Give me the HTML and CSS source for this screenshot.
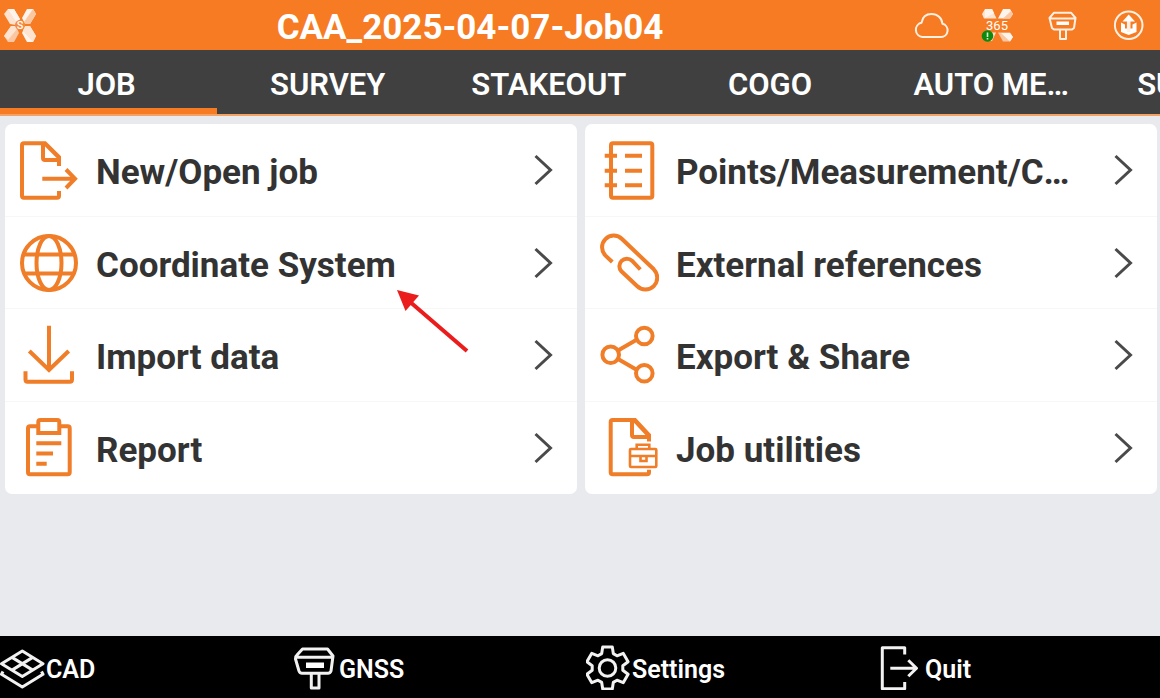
FILE: index.html
```html
<!DOCTYPE html>
<html lang="en">
<head>
  <meta charset="utf-8">
  <meta name="viewport" content="width=device-width, initial-scale=1">
  <title>CAA_2025-04-07-Job04</title>
  <link rel="stylesheet" href="styles.css">
</head>
<body>
  <header class="topbar">
    <svg class="logo" viewBox="0 0 40 50" aria-hidden="true">
      <path fill="#fde3d0" d="M4 14 8 9H14L20 19 16 25 10 24Z"/>
      <path fill="#fff4ec" d="M8 9H14L20 19 17 23Z"/>
      <path fill="#fff4ec" d="M36 14 33 9H27L22 18 25 24 30 24Z"/>
      <path fill="#fbc7a3" d="M36 14 33 9 24 22 25 24 30 24Z"/>
      <path fill="#fbc7a3" d="M4 36 8 42H14L19 33 16 26 11 26Z"/>
      <path fill="#fde3d0" d="M4 36 11 26 16 26 17 29 8 40Z"/>
      <path fill="#fff4ec" d="M36 36 33 42H27L22 33 25 26 30 26Z"/>
      <path fill="#fde3d0" d="M36 36 33 42 23 31 25 26 30 26Z"/>
      <circle cx="20" cy="25" r="5" fill="#f68a3c"/>
      <text class="logo-text" x="20" y="29" text-anchor="middle">S</text>
    </svg>
    <h1 class="title">CAA_2025-04-07-Job04</h1>
    <div class="status">
      <button class="status-btn" type="button" aria-label="Cloud">
        <svg class="line" viewBox="0 0 36 36">
          <path d="M9.500 30H28A6.700 6.700 0 0 0 29.500 16.800C29 11 24.500 7 18.500 7C13 7 9.300 10.500 8.500 15.800A7.200 7.200 0 0 0 9.500 30Z"/>
        </svg>
      </button>
      <button class="status-btn" type="button" aria-label="365 services">
        <svg viewBox="0 0 36 36">
          <path fill="#fde3d0" d="M3 7 6 2H13L17.500 11.500H5Z"/>
          <path fill="#fff4ec" d="M6 2H13L15 6 6 11Z"/>
          <path fill="#fff4ec" d="M34 7 31 2H24L19 11.500H31Z"/>
          <path fill="#fbc7a3" d="M34 7 32 4 24 11.500H31Z"/>
          <path fill="#fde3d0" d="M12 25.500H17L13 34H9Z"/>
          <path fill="#fbc7a3" d="M34 30 31 34.500H24L19 25.500H31Z"/>
          <path fill="#fff4ec" d="M34 30 31 34.500 22 26H31Z"/>
          <text class="badge-text" x="18" y="23" text-anchor="middle">365</text>
          <circle cx="8.500" cy="29" r="5.800" fill="#0d8a0d"/>
          <path stroke="#d8f5d8" stroke-width="1.600" d="M8.500 25.500V30M8.500 31V32.500"/>
        </svg>
      </button>
      <button class="status-btn" type="button" aria-label="Receiver">
        <svg class="line" viewBox="0 0 36 36">
          <path d="M9 5.700H26L30.500 11 29 21 27 22.500H9L7 21 4.500 11ZM5 11.500H30.500M15 23V32H21V23"/>
          <path fill="#fff" stroke="none" d="M11.500 14.500H24V18H11.500Z"/>
        </svg>
      </button>
      <button class="status-btn" type="button" aria-label="Upload">
        <svg class="line" viewBox="0 0 36 36">
          <circle cx="17.700" cy="18.300" r="13.800"/>
          <path fill="#fff" stroke="none" d="M10 15.500 14 17.500V21.500H21.500V17.500L25.500 15.500V25L17.700 28 10 25Z"/>
          <path stroke-width="3.600" d="M17.700 25V11"/>
          <path fill="#fff" stroke="none" d="M17.700 7.500 24 14.500H11.500Z"/>
        </svg>
      </button>
    </div>
  </header>

  <nav class="tabs">
    <button class="tab active" type="button">JOB</button>
    <button class="tab" type="button">SURVEY</button>
    <button class="tab" type="button">STAKEOUT</button>
    <button class="tab" type="button">COGO</button>
    <button class="tab" type="button">AUTO ME…</button>
    <button class="tab" type="button">SURFACES</button>
  </nav>

  <main class="panels">
    <div class="card">
      <a class="row" href="#">
        <svg class="icon" viewBox="0 0 60 60">
          <path d="M40 26V17L26 3.300H5Q3 3.300 3 5.300V55.700Q3 57.700 5 57.700H38Q40 57.700 40 55.700V51M24 4V18Q24 20 26 20H40M26.500 4 40 17.500M23.300 38.700H55.500M47 29.500 56 38.700 47 48"/>
        </svg>
        <span class="label">New/Open job</span>
        <svg class="chevron" viewBox="0 0 20 32"><path d="M2.500 2 17.500 16 2.500 30"/></svg>
      </a>
      <a class="row" href="#">
        <svg class="icon" viewBox="0 0 60 60">
          <circle cx="30" cy="30" r="27"/>
          <ellipse cx="30" cy="30" rx="12.500" ry="27"/>
          <path d="M4.500 21.500H55.500M4.500 40.500H55.500"/>
        </svg>
        <span class="label">Coordinate System</span>
        <svg class="chevron" viewBox="0 0 20 32"><path d="M2.500 2 17.500 16 2.500 30"/></svg>
      </a>
      <a class="row" href="#">
        <svg class="icon" viewBox="0 0 60 60">
          <path d="M30 .700V45M10.300 26 30 45 49.700 26M6.500 46.300V54.500Q6.500 56.700 8.500 56.700H51Q53 56.700 53 54.500V46.300"/>
        </svg>
        <span class="label">Import data</span>
        <svg class="chevron" viewBox="0 0 20 32"><path d="M2.500 2 17.500 16 2.500 30"/></svg>
      </a>
      <a class="row" href="#">
        <svg class="icon" viewBox="0 0 60 60">
          <path d="M19 8.300H11Q9 8.300 9 10.300V54.300Q9 56.300 11 56.300H48.700Q50.700 56.300 50.700 54.300V10.300Q50.700 8.300 48.700 8.300H40.500M19.300 15V4Q19.300 2 21.300 2H38.300Q40.300 2 40.300 4V15ZM17.300 25.300H42.300M17.300 35.500H34M17.300 45.700H27.700"/>
        </svg>
        <span class="label">Report</span>
        <svg class="chevron" viewBox="0 0 20 32"><path d="M2.500 2 17.500 16 2.500 30"/></svg>
      </a>
      <svg class="pointer" viewBox="0 0 72 64" aria-hidden="true">
        <path stroke="#ea1c1c" stroke-width="4" d="M12 11 70 61"/>
        <path fill="#ea1c1c" d="M0 0 22 5.500 8.500 21Z"/>
      </svg>
    </div>

    <div class="card">
      <a class="row" href="#">
        <svg class="icon" viewBox="0 0 60 60">
          <rect x="12" y="3.300" width="41.300" height="54.400" rx="2"/>
          <path d="M5.700 15.700H18M5.700 30.700H18M5.700 45.300H18M26 15.700H43M26 30.700H43M26 45.300H43"/>
        </svg>
        <span class="label">Points/Measurement/C…</span>
        <svg class="chevron" viewBox="0 0 20 32"><path d="M2.500 2 17.500 16 2.500 30"/></svg>
      </a>
      <a class="row" href="#">
        <svg class="icon" viewBox="0 0 60 60">
          <path d="M13.300 29 6.500 22.600A11.700 11.700 0 0 1 23 6L54.800 36.300A11.700 11.700 0 0 1 38 53L22.400 38.300A7.500 7.500 0 0 1 33 27.700L41.300 36.500"/>
        </svg>
        <span class="label">External references</span>
        <svg class="chevron" viewBox="0 0 20 32"><path d="M2.500 2 17.500 16 2.500 30"/></svg>
      </a>
      <a class="row" href="#">
        <svg class="icon" viewBox="0 0 60 60">
          <circle cx="11.700" cy="29.700" r="8.300"/>
          <circle cx="45.300" cy="11" r="8.300"/>
          <circle cx="45.300" cy="48.300" r="8.300"/>
          <path d="M19 25.500 38 14.500M19 34 38 45"/>
        </svg>
        <span class="label">Export &amp; Share</span>
        <svg class="chevron" viewBox="0 0 20 32"><path d="M2.500 2 17.500 16 2.500 30"/></svg>
      </a>
      <a class="row" href="#">
        <svg class="icon" viewBox="0 0 60 60">
          <path d="M50 23.500V17L36 2H13.700Q11.700 2 11.700 4V54.300Q11.700 56.300 13.700 56.300H48Q50 56.300 50 54.300V51.700M33 3V17Q33 19 35 19H50M35.500 2.500 49.500 17.500"/>
          <path stroke-width="2.600" d="M31 32Q31 31 32 31H56.300Q57.300 31 57.300 32V48Q57.300 49 56.300 49H32Q31 49 31 48ZM37.700 31V26.700H50.300V31M31 38H57.300M41.500 38V43H47.500V38"/>
        </svg>
        <span class="label">Job utilities</span>
        <svg class="chevron" viewBox="0 0 20 32"><path d="M2.500 2 17.500 16 2.500 30"/></svg>
      </a>
    </div>
  </main>

  <footer class="bottombar">
    <button class="action" type="button">
      <svg class="action-icon" viewBox="0 0 46 46">
        <path d="M22.300 7 43 19.700 22.300 32.500 1.500 19.700ZM12 13.400 32.700 26.100M32.700 13.400 12 26.100M3 27.500 1.500 30.300 22.300 43 43 30.300 41.500 27.500"/>
      </svg>
      <span>CAD</span>
    </button>
    <button class="action" type="button">
      <svg class="action-icon" viewBox="0 0 46 46">
        <path d="M9.500 5H34.500L40 12 38 27Q37 29.300 35 29.300H9Q7 29.300 6 27L2.500 15Q2.500 12 4 11ZM3 13.300H40.500M18.300 30V44H26V30"/>
        <path fill="#fff" stroke="none" d="M13 18.500H31V24H13Z"/>
      </svg>
      <span>GNSS</span>
    </button>
    <button class="action" type="button">
      <svg class="action-icon" viewBox="0 0 46 46">
        <path d="M26.300 3.100 27.300 9.600 31 11.800 37.200 9.300 42.100 17.700 36.800 21.800V26.200L42.100 30.300 37.200 38.700 31 36.200 27.300 38.400 26.300 44.900H16.700L15.700 38.400 12 36.200 5.800 38.700 .900 30.300 6.200 26.200V21.800L.900 17.700 5.800 9.300 12 11.800 15.700 9.600 16.700 3.100Z"/>
        <circle cx="21.500" cy="24" r="8.300"/>
      </svg>
      <span>Settings</span>
    </button>
    <button class="action" type="button">
      <svg class="action-icon" viewBox="0 0 46 46">
        <path d="M25.700 10.500V3.700H3.300V44.700H25.700V38M11.300 24.300H37M29.300 16.300 37.500 24.300 29.300 32.300"/>
      </svg>
      <span>Quit</span>
    </button>
  </footer>
</body>
</html>
```
FILE: styles.css
```css
* {
  margin: 0;
  padding: 0;
  box-sizing: border-box;
}

body {
  min-height: 100vh;
  display: flex;
  flex-direction: column;
  overflow-x: hidden;
  background-color: #e9eaee;
  color: #333333;
  font-family: Roboto, "Liberation Sans", sans-serif;
}

button {
  border: none;
  background: none;
  color: inherit;
  font-family: inherit;
  cursor: pointer;
}

svg {
  display: block;
  flex-shrink: 0;
  fill: none;
}

/* top bar */
.topbar {
  display: flex;
  align-items: center;
  height: 50px;
  padding-right: 13px;
  background-color: #f67b22;
  color: #ffffff;
}

.logo {
  width: 40px;
  height: 50px;
}

.logo-text {
  fill: #ffffff;
  font-size: 11px;
  font-weight: 500;
}

.title {
  flex: 1;
  padding-right: 13px;
  padding-top: 6px;
  text-align: center;
  font-size: 35px;
  line-height: 40px;
  font-weight: 700;
}

.status {
  display: flex;
  gap: 30px;
}

.status-btn svg {
  width: 36px;
  height: 36px;
}

.line {
  stroke: #fff0e4;
  stroke-width: 2;
  stroke-linejoin: round;
}

.badge-text {
  fill: #ffffff;
  font-size: 13px;
}

/* tabs */
.tabs {
  display: flex;
  height: 66px;
  margin-left: -4px;
  overflow: hidden;
  background-color: #404040;
  border-bottom: 2px solid #f3a266;
}

.tab {
  flex: 0 0 19%;
  padding-top: 10px;
  border-bottom: 6px solid transparent;
  color: #ffffff;
  font-size: 31px;
  font-weight: 600;
}

.tab.active {
  border-bottom-color: #f67b22;
}

/* menu cards */
.panels {
  flex: 1;
  display: grid;
  grid-template-columns: 1fr 1fr;
  gap: 8px;
  align-items: start;
  padding: 8px 3px 8px 5px;
}

.card {
  position: relative;
  min-width: 0;
  border-radius: 7px;
  background-color: #ffffff;
}

.row {
  display: flex;
  align-items: center;
  height: 93px;
  padding: 0 24px 0 14px;
  border-bottom: 1px solid #f7f7f8;
  color: inherit;
  text-decoration: none;
}

.row:nth-of-type(even) {
  height: 92px;
}

.row:nth-of-type(4) {
  border-bottom: none;
}

.icon {
  width: 60px;
  height: 60px;
  stroke: #f07d28;
  stroke-width: 4;
}

.label {
  flex: 1;
  min-width: 0;
  padding: 6px 16px 0 17px;
  font-size: 35px;
  line-height: 44px;
  font-weight: 700;
  white-space: nowrap;
}

.chevron {
  width: 20px;
  height: 32px;
  stroke: #4a4a4a;
  stroke-width: 3;
}

/* red arrow over the second row */
.pointer {
  position: absolute;
  top: 166px;
  left: 392px;
  width: 72px;
  height: 64px;
}

/* bottom bar */
.bottombar {
  display: grid;
  grid-template-columns: repeat(4, 1fr);
  gap: 12px;
  height: 62px;
  background-color: #000000;
  color: #ffffff;
}

.action {
  display: flex;
  align-items: center;
  font-size: 25px;
  font-weight: 600;
}

.action span {
  padding-top: 4px;
}

.action-icon {
  width: 46px;
  height: 46px;
  stroke: #f2f2f2;
  stroke-width: 3;
  stroke-linejoin: round;
}
```
